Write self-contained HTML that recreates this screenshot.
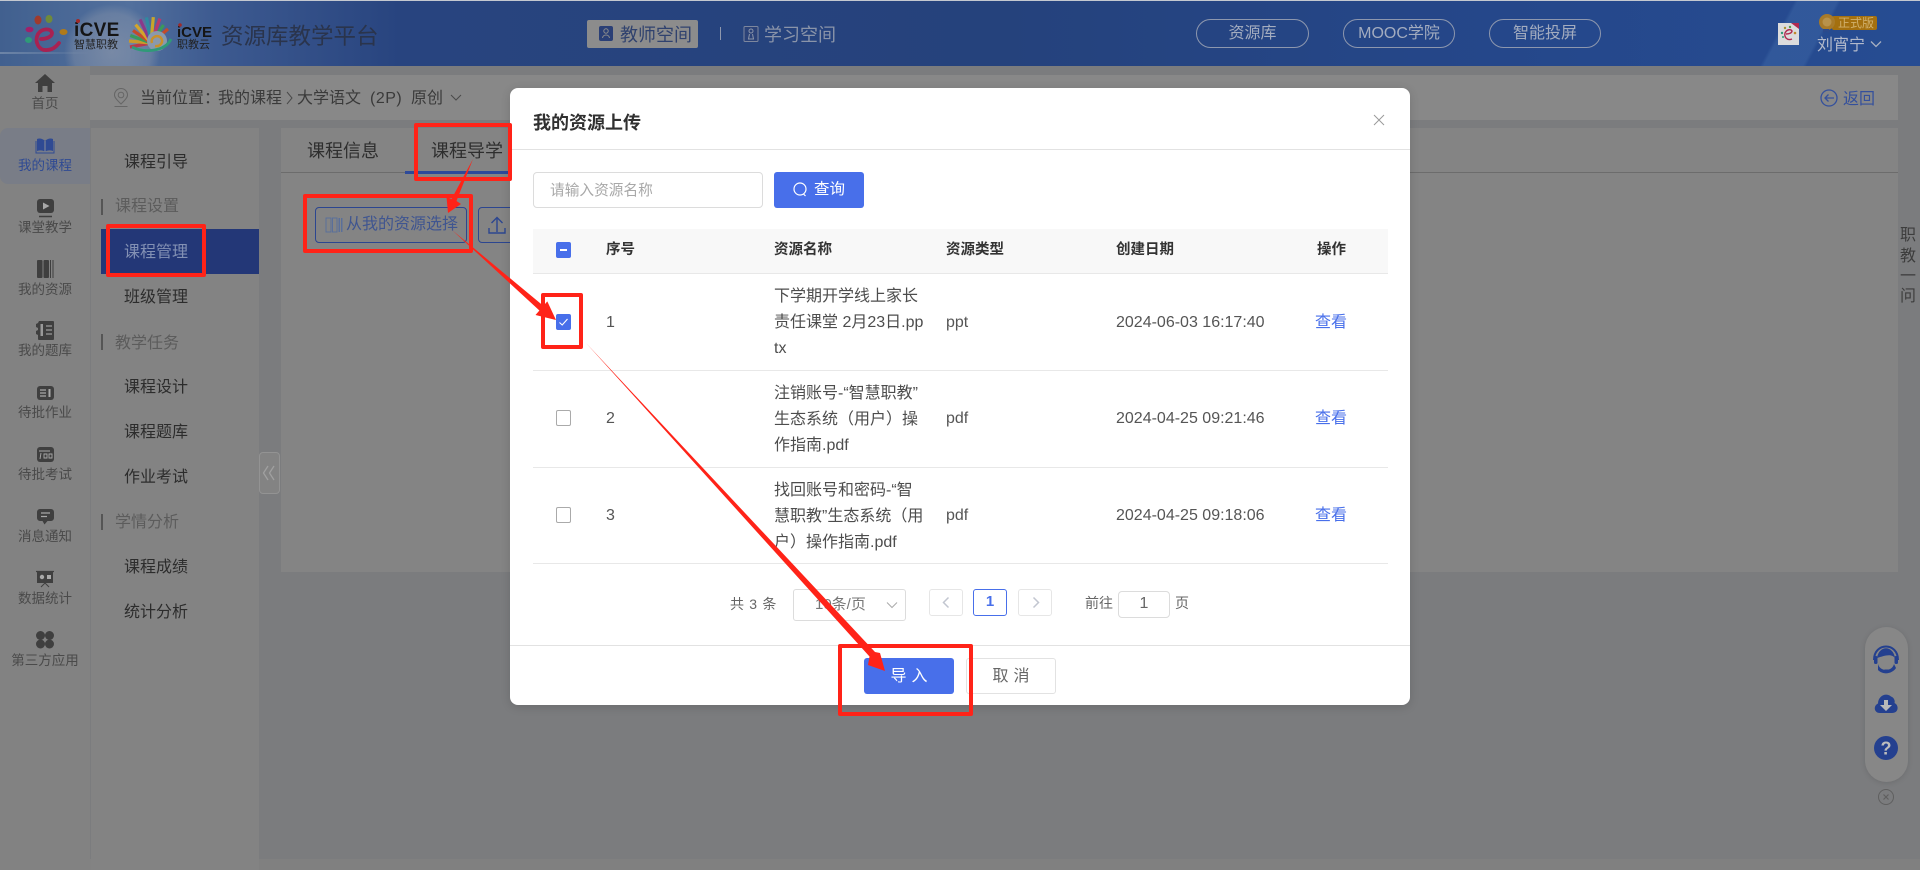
<!DOCTYPE html>
<html lang="zh-CN">
<head>
<meta charset="utf-8">
<title>我的资源上传</title>
<style>
html,body{margin:0;padding:0;width:1920px;height:870px;overflow:hidden;background:#7b7c7e}
body{position:relative;font-family:"Liberation Sans","Noto Sans CJK SC",sans-serif;color:#333}
div,span{box-sizing:border-box}
.a{position:absolute;white-space:nowrap;line-height:20px}
.b{position:absolute}
.nav{position:absolute;left:0;width:90px;text-align:center;font-size:13.5px;line-height:20px;color:#4a4a4a;white-space:nowrap}
.m{position:absolute;left:124px;font-size:16px;line-height:20px;color:#2c2c2c;white-space:nowrap}
.g{position:absolute;left:115px;font-size:16px;line-height:20px;color:#5c5c5c;white-space:nowrap}
.gb{position:absolute;left:101px;width:2px;height:16px;background:#555}
.pill{position:absolute;top:19px;height:29px;border:1px solid #8d97ae;border-radius:15px;text-align:center;font-size:16px;line-height:27px;color:#a3acbf}
.th{position:absolute;font-size:14.5px;font-weight:bold;line-height:20px;color:#333;white-space:nowrap}
.td{position:absolute;font-size:16px;line-height:20px;color:#555;white-space:nowrap}
.nm{position:absolute;left:264px;font-size:16px;line-height:26px;color:#4d4d4d;white-space:nowrap}
.ln{position:absolute;left:23px;width:855px;height:1px;background:#e8e8e8}
.cb{position:absolute;left:46px;width:15px;height:16px;border:1px solid #aaa;border-radius:2px;background:#fff}
.blue{background:#486fea;border-color:#486fea}
.pg{position:absolute;top:501px;width:34px;height:27px;border:1px solid #e6e6e6;border-radius:3px;background:#fff;text-align:center;font-size:15px;line-height:24px}
</style>
</head>
<body>

<!-- header -->
<div class="b" style="left:0;top:0;width:1920px;height:66px;background:
linear-gradient(118deg,transparent 0,transparent 91.8%,rgba(120,170,220,.14) 92%,rgba(120,170,220,.14) 94%,transparent 94.2%),
radial-gradient(circle 48px at 112px 52px,rgba(175,175,180,.42),rgba(175,175,180,.25) 80%,transparent 100%),
linear-gradient(90deg,#41608f 0,#52709d 130px,#3d5a90 215px,#28447f 400px,#25427c 1000px,#25478a 1500px,#264c92 1920px)"></div>
<div class="b" style="left:0;top:0;width:1920px;height:1px;background:#c4c8d0"></div>
<div class="b" style="left:0;top:52px;width:90px;height:2px;background:linear-gradient(90deg,rgba(190,200,210,.35),transparent)"></div>

<!-- top bits: logos -->
<div class="a" style="left:74px;top:21px;font-size:19px;font-weight:bold;color:#151515;letter-spacing:.3px;line-height:20px">iCVE</div>
<div class="a" style="left:74px;top:37px;font-size:11px;color:#222;line-height:16px">智慧职教</div>
<div class="a" style="left:177px;top:24px;font-size:15px;font-weight:bold;color:#151515;line-height:18px">iCVE</div>
<div class="a" style="left:177px;top:37px;font-size:11px;color:#222;line-height:16px">职教云</div>
<div class="a" style="left:221px;top:25px;font-size:22.5px;line-height:24px;color:#2a344c">资源库教学平台</div>

<div class="b" style="left:587px;top:20px;width:111px;height:28px;background:#8c8c8c;border-radius:2px"></div>
<div class="a" style="left:620px;top:25px;font-size:18px;color:#30426e">教师空间</div>
<div class="b" style="left:720px;top:27px;width:1px;height:13px;background:#8f98ad"></div>
<div class="a" style="left:764px;top:25px;font-size:18px;color:#8a94a9">学习空间</div>

<div class="pill" style="left:1196px;width:113px">资源库</div>
<div class="pill" style="left:1343px;width:112px">MOOC学院</div>
<div class="pill" style="left:1489px;width:112px">智能投屏</div>

<div class="b" style="left:1778px;top:23px;width:21px;height:22px;background:#dcdcdc"></div>
<div class="b" style="left:1832px;top:16px;width:45px;height:14px;background:#a4700f;border-radius:2px"></div>
<div class="a" style="left:1838px;top:13px;font-size:12px;color:#d0b06c">正式版</div>
<div class="a" style="left:1817px;top:36px;font-size:16px;color:#b3bacb">刘宵宁</div>

<!-- left rail -->
<div class="b" style="left:0;top:66px;width:90px;height:804px;background:#828282"></div>
<div class="b" style="left:0;top:128px;width:90px;height:56px;background:#797d87;border-radius:8px 0 0 8px"></div>
<div class="nav" style="top:94px">首页</div>
<div class="nav" style="top:156px;color:#2f4a93">我的课程</div>
<div class="nav" style="top:218px">课堂教学</div>
<div class="nav" style="top:280px">我的资源</div>
<div class="nav" style="top:341px">我的题库</div>
<div class="nav" style="top:403px">待批作业</div>
<div class="nav" style="top:465px">待批考试</div>
<div class="nav" style="top:527px">消息通知</div>
<div class="nav" style="top:589px">数据统计</div>
<div class="nav" style="top:651px">第三方应用</div>

<!-- breadcrumb -->
<div class="b" style="left:90px;top:75px;width:1808px;height:45px;background:#888"></div>
<div class="a" style="left:140px;top:89px;font-size:16px;color:#3a3a3a">当前位置：</div>
<div class="a" style="left:218px;top:89px;font-size:16px;color:#3a3a3a">我的课程</div>
<div class="a" style="left:297px;top:89px;font-size:16px;color:#3a3a3a">大学语文</div>
<div class="a" style="left:370px;top:89px;font-size:16px;letter-spacing:.5px;color:#3a3a3a">(2P)</div>
<div class="a" style="left:411px;top:89px;font-size:16px;color:#3a3a3a">原创</div>
<div class="a" style="left:1843px;top:90px;font-size:16px;color:#34509c">返回</div>

<!-- second menu -->
<div class="b" style="left:91px;top:128px;width:168px;height:742px;background:#838383"></div>
<div class="m" style="top:153px">课程引导</div>
<div class="gb" style="top:199px"></div><div class="g" style="top:197px">课程设置</div>
<div class="b" style="left:101px;top:229px;width:158px;height:45px;background:#233777"></div>
<div class="m" style="top:243px;color:#8391b4">课程管理</div>
<div class="m" style="top:288px">班级管理</div>
<div class="gb" style="top:334px"></div><div class="g" style="top:334px">教学任务</div>
<div class="m" style="top:378px">课程设计</div>
<div class="m" style="top:423px">课程题库</div>
<div class="m" style="top:468px">作业考试</div>
<div class="gb" style="top:514px"></div><div class="g" style="top:513px">学情分析</div>
<div class="m" style="top:558px">课程成绩</div>
<div class="m" style="top:603px">统计分析</div>
<div class="b" style="left:259px;top:452px;width:21px;height:42px;background:#838383;border:1px solid #939393;border-radius:4px"></div>

<!-- content -->
<div class="b" style="left:281px;top:128px;width:1617px;height:444px;background:#848484"></div>
<div class="b" style="left:281px;top:172px;width:1617px;height:1px;background:#6c6c6c"></div>
<div class="b" style="left:405px;top:171px;width:105px;height:3px;background:#2d4a9a"></div>
<div class="a" style="left:307px;top:141px;font-size:18px;color:#2e2e2e">课程信息</div>
<div class="a" style="left:431px;top:141px;font-size:18px;color:#2e2e2e">课程导学</div>
<div class="b" style="left:315px;top:207px;width:152px;height:36px;border:1px solid #2c4690;border-radius:4px"></div>
<div class="a" style="left:346px;top:215px;font-size:16px;color:#3f5590">从我的资源选择</div>
<div class="b" style="left:478px;top:207px;width:50px;height:36px;border:1px solid #2c4690;border-radius:4px"></div>

<!-- right -->
<div class="a" style="left:1900px;top:226px;font-size:16px;color:#3d3d3d">职</div>
<div class="a" style="left:1900px;top:247px;font-size:16px;color:#3d3d3d">教</div>
<div class="a" style="left:1900px;top:267px;font-size:16px;color:#3d3d3d">一</div>
<div class="a" style="left:1900px;top:287px;font-size:16px;color:#3d3d3d">问</div>
<div class="b" style="left:1865px;top:627px;width:43px;height:155px;border-radius:22px;background:#878787;box-shadow:0 1px 6px rgba(0,0,0,.12)"></div>
<div class="b" style="left:0;top:859px;width:1920px;height:11px;background:#808080"></div>
<div class="b" style="left:0;top:859px;width:91px;height:11px;background:#828282"></div>
<div class="b" style="left:91px;top:859px;width:168px;height:11px;background:#838383"></div>

<!-- under-modal icons -->
<svg class="b" style="left:0;top:0" width="1920" height="870" viewBox="0 0 1920 870">
  <!-- logo 1 -->
  <ellipse cx="38" cy="20" rx="3.5" ry="4.5" fill="#a03a2c"/>
  <ellipse cx="49" cy="19" rx="3.5" ry="4" fill="#6f8a3a"/>
  <ellipse cx="29.5" cy="29.5" rx="4" ry="2.8" fill="#a0206a"/>
  <ellipse cx="63.5" cy="32" rx="4" ry="3" fill="#b07a1a"/>
  <ellipse cx="28.5" cy="40" rx="3.5" ry="3" fill="#2f9a78"/>
  <path d="M41 39 C46 39 52 37 52 33 C51 28 42 28 38 34 C34 42 39 51 47 50 C52 50 56 47 59 43" fill="none" stroke="#a82252" stroke-width="3.800" stroke-linecap="round"/>
  <circle cx="78" cy="21" r="2" fill="#a02a2a"/>
  <!-- peacock -->
  <g fill="none" stroke-width="3.200">
    <path d="M151 43 L130 47" stroke="#b83a4a"/><path d="M151 43 L129 41" stroke="#c99a2a"/>
    <path d="M151 43 L130.3 35.5" stroke="#3a9a5a"/><path d="M151 43 L133 30.4" stroke="#c44a2a"/>
    <path d="M151 43 L135.6 24.6" stroke="#d4a52a"/><path d="M151 43 L140 19.4" stroke="#8a3a8a"/>
    <path d="M151 43 L146.5 17.4" stroke="#2f8aa0"/><path d="M151 43 L153.3 17.1" stroke="#c9a52a"/>
    <path d="M151 43 L159.9 18.6" stroke="#b83a6a"/><path d="M151 43 L163.6 25" stroke="#3a9a5a"/>
    <path d="M151 43 L168 29" stroke="#c44a2a"/>
  </g>
  <circle cx="157" cy="41" r="10" fill="#8a99ad"/>
  <path d="M152 43 C150 37 158 34 161 38 C164 42 160 47 155 46" fill="none" stroke="#c8902a" stroke-width="2.500"/>
  <path d="M132 47 C144 53 165 52 171 39" fill="none" stroke="#2f9a78" stroke-width="2.800"/>
  <circle cx="180" cy="25" r="1.800" fill="#a02a2a"/>

  <!-- header nav icons -->
  <rect x="599" y="26" width="14" height="15" rx="2" fill="#2a3f76"/>
  <circle cx="606" cy="31" r="2.200" fill="none" stroke="#8c8c8c"/><path d="M602.5 38 C603 34 609 34 609.5 38" fill="none" stroke="#8c8c8c"/>
  <rect x="744" y="26.5" width="14" height="15" rx="1" fill="#2b4278" stroke="#7d879e"/>
  <circle cx="751" cy="31" r="2" fill="none" stroke="#8a94a9"/><path d="M748 39 H754 M749.5 34 L748.5 39 M752.5 34 L753.5 39" stroke="#8a94a9" fill="none"/>

  <!-- avatar -->
  <path d="M1786 34 C1789 34 1792 33 1792 31 C1791 29 1787 29 1785 33 C1784 37 1787 41 1792 39" fill="none" stroke="#b02a50" stroke-width="1.400"/>
  <circle cx="1785" cy="28" r="1.200" fill="#a89030"/><circle cx="1790" cy="27" r="1.200" fill="#5a9a4a"/><circle cx="1782" cy="33" r="1.200" fill="#2f9a78"/><circle cx="1795" cy="33" r="1.300" fill="#c08a2a"/><circle cx="1783" cy="37" r="1" fill="#2f9a78"/>
  <path d="M1791 23 H1799 V29 Z" fill="#b02a50"/>
  <!-- medal -->
  <circle cx="1827" cy="22" r="8" fill="#a87a28"/><circle cx="1827" cy="22" r="4.500" fill="#b8924a"/>
  <path d="M1823 29 V33 L1826 31 L1829 33 V29 Z" fill="#2d4a8a"/>
  <path d="M1871 41.5 L1876 46.5 L1881 41.5" fill="none" stroke="#a8b0c2" stroke-width="1.300"/>

  <!-- rail icons -->
  <path d="M45 74 L55 83 H52 V92 H47.5 V86 H42.5 V92 H38 V83 H35 Z" fill="#3f3f3f"/>
  <path d="M45 141 C42.5 138.5 39.5 138 37 139 V151 C40 150 43 150 45 152 C47 150 50 150 53 151 V139 C50.5 138 47.5 138.5 45 141Z" fill="#2f4a93"/>
  <path d="M36 141 V153 H54 V141" fill="none" stroke="#2f4a93" stroke-width="1"/>
  <path d="M45 141 V152" stroke="#8a8e99" stroke-width="1"/>
  <rect x="37" y="199" width="17" height="14" rx="3" fill="#3f3f3f"/><path d="M43 202.5 L49.5 206 L43 209.5Z" fill="#a8a8a8"/><path d="M39 216.5 H52" stroke="#3f3f3f" stroke-width="1.500"/>
  <rect x="37" y="260" width="5.500" height="18" rx="1" fill="#3f3f3f"/><rect x="43.5" y="260" width="5.500" height="18" rx="1" fill="#3f3f3f"/><rect x="50" y="260" width="1" height="18" fill="#3f3f3f"/><rect x="52.5" y="260" width="1" height="18" fill="#3f3f3f"/>
  <path d="M39 321 H53 A1 1 0 0 1 54 322 V339 A1 1 0 0 1 53 340 H39 A1 1 0 0 1 38 339 V335 L36 334 V331 L38 330 V328 L36 327 V324 L38 323Z" fill="#3f3f3f"/>
  <path d="M46 326 H52 M46 330 H52 M46 334 H52" stroke="#9a9a9a" stroke-width="1.300"/><rect x="40.5" y="324" width="2.500" height="12" fill="#9a9a9a"/>
  <rect x="37" y="386" width="17" height="14" rx="3" fill="#3f3f3f"/><path d="M40 390 H46 M40 393 H46 M40 396 H46" stroke="#a8a8a8" stroke-width="1.200"/><path d="M49.5 389 V397" stroke="#a8a8a8" stroke-width="2"/>
  <rect x="37" y="447" width="17" height="15" rx="3" fill="#3f3f3f"/><path d="M41 453 L40 459 M44 454 h3 v4 h-3z M49 454 h3 v4 h-3z M39 451 H50" stroke="#a8a8a8" stroke-width=".9" fill="none"/>
  <path d="M40 509 H51 A3 3 0 0 1 54 512 V518 A3 3 0 0 1 51 521 H47.5 L44.5 524.5 L42.5 521 H40 A3 3 0 0 1 37 518 V512 A3 3 0 0 1 40 509Z" fill="#3f3f3f"/><path d="M41 513 H50 M41 516.5 H47" stroke="#a8a8a8" stroke-width="1.300"/>
  <path d="M36 571.5 H54" stroke="#3f3f3f" stroke-width="1.200"/><rect x="37" y="572" width="16" height="11" fill="#3f3f3f"/><circle cx="42" cy="577" r="2.200" fill="#a8a8a8"/><rect x="47" y="575" width="4" height="4" fill="#a8a8a8"/><path d="M45 583 L41 587 M45 583 L49 587" stroke="#3f3f3f" stroke-width="1"/>
  <circle cx="40.5" cy="635.5" r="4.500" fill="#3f3f3f"/><circle cx="49.5" cy="635.5" r="4.500" fill="#3f3f3f"/><circle cx="40.5" cy="644" r="4.500" fill="#3f3f3f"/><circle cx="49.5" cy="644" r="4.500" fill="#3f3f3f"/>

  <!-- breadcrumb icons -->
  <path d="M121 104 C117 100 114.5 97.5 114.5 95 A6.5 6.5 0 0 1 127.5 95 C127.5 97.5 125 100 121 104Z" fill="none" stroke="#666" stroke-width="1.100"/><circle cx="121" cy="95" r="2.800" fill="none" stroke="#666"/><path d="M114.5 106.5 H127.5" fill="none" stroke="#666"/>
  <path d="M287 92 L292 98 L287 104" fill="none" stroke="#4a4a4a" stroke-width="1"/>
  <path d="M451 95 L456 100 L461 95" fill="none" stroke="#4a4a4a" stroke-width="1"/>
  <circle cx="1829" cy="98" r="8" fill="none" stroke="#34509c" stroke-width="1.300"/><path d="M1834 98 H1825 M1828.5 94.5 L1825 98 L1828.5 101.5" fill="none" stroke="#34509c" stroke-width="1.300"/>

  <!-- collapse -->
  <path d="M268 466 L263.5 473 L268 480 M274 466 L269.5 473 L274 480" fill="none" stroke="#a0a0a0" stroke-width="1.300"/>

  <!-- btn icons -->
  <rect x="326" y="218" width="5" height="14" fill="none" stroke="#5a6f9a"/><rect x="332.5" y="218" width="4.500" height="14" fill="none" stroke="#5a6f9a"/><rect x="338.5" y="218" width="1.500" height="14" fill="#5a6f9a"/><rect x="341" y="218" width="1.500" height="14" fill="#5a6f9a"/>
  <path d="M497 232 V218 M491.5 223 L497 217.5 L502.5 223 M489 228 V233 H505 V228" fill="none" stroke="#2c4690" stroke-width="1.400"/>

  <!-- float icons -->
  <path d="M1874 660 C1874 642 1898 642 1898 660" fill="none" stroke="#24408f" stroke-width="2"/>
  <path d="M1877 658 C1879 645 1893 645 1895 658 C1891 653 1884 656 1877 658Z" fill="#24408f"/>
  <rect x="1874" y="656" width="3.500" height="8" rx="1.500" fill="#24408f"/><rect x="1894.5" y="656" width="3.500" height="8" rx="1.500" fill="#24408f"/>
  <path d="M1878 664 C1880 672 1892 672 1894 664 L1896 668 C1893 673 1884 676 1878 670Z" fill="#24408f"/>
  <rect x="1884" y="669.5" width="6" height="2.500" rx="1" fill="#24408f"/>
  <path d="M1880 713 C1874 713 1873 706 1878 703.5 C1878 696 1886 692 1891 696.5 C1895 698 1895 702 1894.5 703 C1899 705 1899 713 1892 713Z" fill="#24408f"/>
  <path d="M1884 700 H1888 V705 H1892 L1886 711 L1880 705 H1884Z" fill="#b9b9b9"/>
  <circle cx="1886" cy="748" r="12" fill="#24408f"/>
  <text x="1886" y="754.5" text-anchor="middle" font-family="Liberation Sans" font-weight="bold" font-size="18" fill="#bdbdbd">?</text>
  <circle cx="1886" cy="797" r="7.500" fill="none" stroke="#5f5f5f" stroke-width="1"/><path d="M1883.5 794.5 L1888.5 799.5 M1888.5 794.5 L1883.5 799.5" stroke="#5f5f5f" stroke-width="1.200"/>
</svg>

<!-- MODAL -->
<div class="b" style="left:510px;top:88px;width:900px;height:617px;background:#fff;border-radius:8px;box-shadow:0 2px 10px rgba(0,0,0,.14)">
  <div class="a" style="left:23px;top:25px;font-size:18px;font-weight:bold;color:#303030">我的资源上传</div>
  <div class="b" style="left:0;top:61px;width:900px;height:1px;background:#e2e2e2"></div>
  <svg class="b" style="left:863px;top:26px" width="12" height="12" viewBox="0 0 12 12"><path d="M1 1 L11 11 M11 1 L1 11" stroke="#9a9a9a" stroke-width="1"/></svg>

  <div class="b" style="left:23px;top:84px;width:230px;height:36px;border:1px solid #dcdcdc;border-radius:4px;background:#fff"></div>
  <div class="a" style="left:40px;top:93px;font-size:14.7px;color:#a8a8a8">请输入资源名称</div>
  <div class="b" style="left:264px;top:84px;width:90px;height:36px;background:#486fea;border-radius:3px"></div>
  <svg class="b" style="left:282px;top:93px" width="16" height="17" viewBox="0 0 16 17"><circle cx="8" cy="8" r="6" fill="none" stroke="#fff" stroke-width="1.200"/><path d="M11.5 13 L13.5 15" stroke="#fff" stroke-width="1.200"/></svg>
  <div class="a" style="left:304px;top:92px;font-size:15.5px;color:#fff">查询</div>

  <div class="b" style="left:23px;top:141px;width:855px;height:44px;background:#f8f8f8"></div>
  <div class="b" style="left:23px;top:185px;width:855px;height:1px;background:#e8e8e8"></div>
  <div class="cb blue" style="top:154px"></div>
  <div class="b" style="left:50px;top:161px;width:7px;height:2px;background:#fff"></div>
  <div class="th" style="left:96px;top:152px">序号</div>
  <div class="th" style="left:264px;top:152px">资源名称</div>
  <div class="th" style="left:436px;top:152px">资源类型</div>
  <div class="th" style="left:606px;top:152px">创建日期</div>
  <div class="th" style="left:807px;top:152px">操作</div>

  <div class="cb blue" style="top:226px"></div>
  <svg class="b" style="left:48px;top:228px" width="11" height="12" viewBox="0 0 11 12"><path d="M1.5 6.5 L4.2 9 L9.5 3" fill="none" stroke="#fff" stroke-width="1.100"/></svg>
  <div class="td" style="left:96px;top:225px">1</div>
  <div class="nm" style="top:196px">下学期开学线上家长<br>责任课堂 2月23日.pp<br>tx</div>
  <div class="td" style="left:436px;top:225px">ppt</div>
  <div class="td" style="left:606px;top:225px">2024-06-03 16:17:40</div>
  <div class="td" style="left:805px;top:225px;color:#486fea">查看</div>
  <div class="ln" style="top:282px"></div>

  <div class="cb" style="top:322px"></div>
  <div class="td" style="left:96px;top:321px">2</div>
  <div class="nm" style="top:293px">注销账号-“智慧职教”<br>生态系统（用户）操<br>作指南.pdf</div>
  <div class="td" style="left:436px;top:321px">pdf</div>
  <div class="td" style="left:606px;top:321px">2024-04-25 09:21:46</div>
  <div class="td" style="left:805px;top:321px;color:#486fea">查看</div>
  <div class="ln" style="top:379px"></div>

  <div class="cb" style="top:419px"></div>
  <div class="td" style="left:96px;top:418px">3</div>
  <div class="nm" style="top:390px">找回账号和密码-“智<br>慧职教”生态系统（用<br>户）操作指南.pdf</div>
  <div class="td" style="left:436px;top:418px">pdf</div>
  <div class="td" style="left:606px;top:418px">2024-04-25 09:18:06</div>
  <div class="td" style="left:805px;top:418px;color:#486fea">查看</div>
  <div class="ln" style="top:475px"></div>

  <div class="a" style="left:220px;top:506px;font-size:14px;color:#666;letter-spacing:.7px">共 3 条</div>
  <div class="b" style="left:283px;top:501px;width:113px;height:32px;border:1px solid #dcdcdc;border-radius:3px"></div>
  <div class="a" style="left:305px;top:507px;font-size:15px;color:#777">10条/页</div>
  <svg class="b" style="left:376px;top:513px" width="12" height="9" viewBox="0 0 12 9"><path d="M1 1.5 L6 6.5 L11 1.5" fill="none" stroke="#aaa" stroke-width="1"/></svg>
  <div class="pg" style="left:419px"></div>
  <svg class="b" style="left:431px;top:508px" width="10" height="13" viewBox="0 0 10 13"><path d="M7.5 1.5 L2.5 6.5 L7.5 11.5" fill="none" stroke="#c2c6d0" stroke-width="1.500"/></svg>
  <div class="pg" style="left:463px;border-color:#486fea;color:#486fea;font-weight:bold">1</div>
  <div class="pg" style="left:508px"></div>
  <svg class="b" style="left:521px;top:508px" width="10" height="13" viewBox="0 0 10 13"><path d="M2.5 1.5 L7.5 6.5 L2.5 11.5" fill="none" stroke="#c2c6d0" stroke-width="1.500"/></svg>
  <div class="a" style="left:575px;top:505px;font-size:14px;color:#666">前往</div>
  <div class="b" style="left:608px;top:503px;width:52px;height:27px;border:1px solid #dcdcdc;border-radius:4px;text-align:center;font-size:16px;line-height:24px;color:#666">1</div>
  <div class="a" style="left:665px;top:505px;font-size:14px;color:#666">页</div>

  <div class="b" style="left:0;top:557px;width:900px;height:1px;background:#e2e2e2"></div>
  <div class="b" style="left:354px;top:570px;width:90px;height:36px;background:#486fea;border-radius:3px;text-align:center;color:#fff;font-size:16px;line-height:38px;letter-spacing:5px;text-indent:5px">导入</div>
  <div class="b" style="left:456px;top:570px;width:90px;height:36px;border:1px solid #e2e2e2;border-radius:3px;text-align:center;color:#666;font-size:16px;line-height:36px;letter-spacing:5px;text-indent:5px">取消</div>
</div>

<!-- annotations -->
<svg class="b" style="left:0;top:0" width="1920" height="870" viewBox="0 0 1920 870">
  <g fill="none" stroke="#ff2318" stroke-width="4" stroke-linejoin="round">
    <rect x="416" y="125" width="94" height="54"/>
    <rect x="305" y="196" width="166" height="55"/>
    <rect x="108" y="226" width="96" height="49"/>
    <rect x="543" y="295" width="38" height="52"/>
    <rect x="840" y="646" width="131" height="68"/>
  </g>
  <g fill="#ff2318">
    <polygon points="473,159 456.5,201 461,204 448,213 446.5,197 451.5,199"/>
    <polygon points="452,230 543.4,305.9 547.3,301.4 556,320 535.5,315 539.4,310.5"/>
    <polygon points="586,343 875,652 880,653 885,671 868,665 869.5,656.5"/>
  </g>
</svg>
</body>
</html>
